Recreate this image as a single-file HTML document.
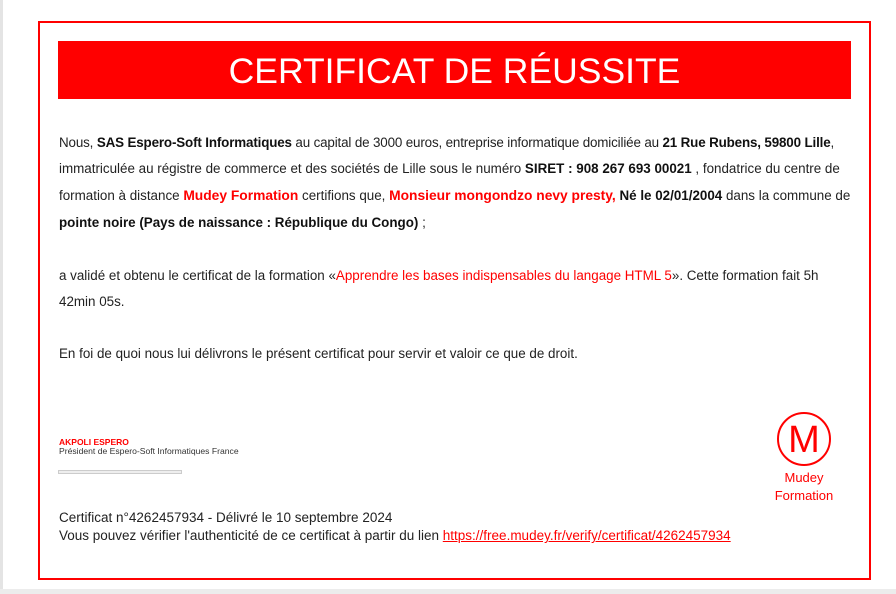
<!DOCTYPE html>
<html><head><meta charset="utf-8"><style>
body{margin:0;width:896px;height:594px;background:#fff;position:relative;overflow:hidden;font-family:"Liberation Sans",sans-serif;color:#222}
.lg{position:absolute;left:0;top:0;width:3px;height:594px;background:#e4e4e4}
.bg{position:absolute;left:0;top:589px;width:896px;height:5px;background:#ececec}
.box{position:absolute;left:38px;top:21px;width:829px;height:555px;border:2px solid #f00}
.ban{position:absolute;left:58px;top:41px;width:793px;height:58px;background:#f00;color:#fff;font-size:35.5px;text-align:center;line-height:60px}
.l{position:absolute;left:59px;font-size:13.4px;white-space:nowrap}
b{font-weight:bold;color:#111}
.r{color:#f00}
.rb{color:#f00;font-weight:bold;font-size:13.8px}
</style></head><body>
<div class="lg"></div><div class="bg"></div>
<div class="box"></div>
<div class="ban">CERTIFICAT DE RÉUSSITE</div>
<div class="l" style="top:135px;letter-spacing:-0.15px">Nous, <b>SAS Espero-Soft Informatiques</b> au capital de 3000 euros, entreprise informatique domiciliée au <b>21 Rue Rubens, 59800 Lille</b>,</div>
<div class="l" style="top:161px">immatriculée au régistre de commerce et des sociétés de Lille sous le numéro <b>SIRET : 908 267 693 00021</b> , fondatrice du centre de</div>
<div class="l" style="top:188px">formation à distance <span class="rb">Mudey Formation</span> certifions que, <span class="rb">Monsieur mongondzo nevy presty,</span> <b>Né le 02/01/2004</b> dans la commune de</div>
<div class="l" style="top:215px"><b>pointe noire (Pays de naissance : République du Congo)</b> ;</div>
<div class="l" style="top:268px">a validé et obtenu le certificat de la formation «<span class="r">Apprendre les bases indispensables du langage HTML 5</span>». Cette formation fait 5h</div>
<div class="l" style="top:294px">42min 05s.</div>
<div class="l" style="top:346px">En foi de quoi nous lui délivrons le présent certificat pour servir et valoir ce que de droit.</div>
<div style="position:absolute;left:59px;top:437px;font-size:8.5px;font-weight:bold;color:#f00">AKPOLI ESPERO</div>
<div style="position:absolute;left:59px;top:446px;font-size:8.6px;color:#333">Président de Espero-Soft Informatiques France</div>
<div style="position:absolute;left:58px;top:470px;width:122px;height:2px;border:1px solid #ccc;background:#eee"></div>
<div class="l" style="top:510px;font-size:13.5px;color:#222">Certificat n°4262457934 - Délivré le 10 septembre 2024</div>
<div class="l" style="top:528px;font-size:13.5px;color:#222">Vous pouvez vérifier l'authenticité de ce certificat à partir du lien <span style="color:#f00;text-decoration:underline">https://free.mudey.fr/verify/certificat/4262457934</span></div>
<div style="position:absolute;left:777px;top:412px;width:50px;height:50px;border:2px solid #f00;border-radius:50%;color:#f00;font-size:38px;text-align:center;line-height:52px">M</div>
<div style="position:absolute;left:754px;top:469px;width:100px;text-align:center;color:#f00;font-size:13px;line-height:18px">Mudey<br>Formation</div>
</body></html>
